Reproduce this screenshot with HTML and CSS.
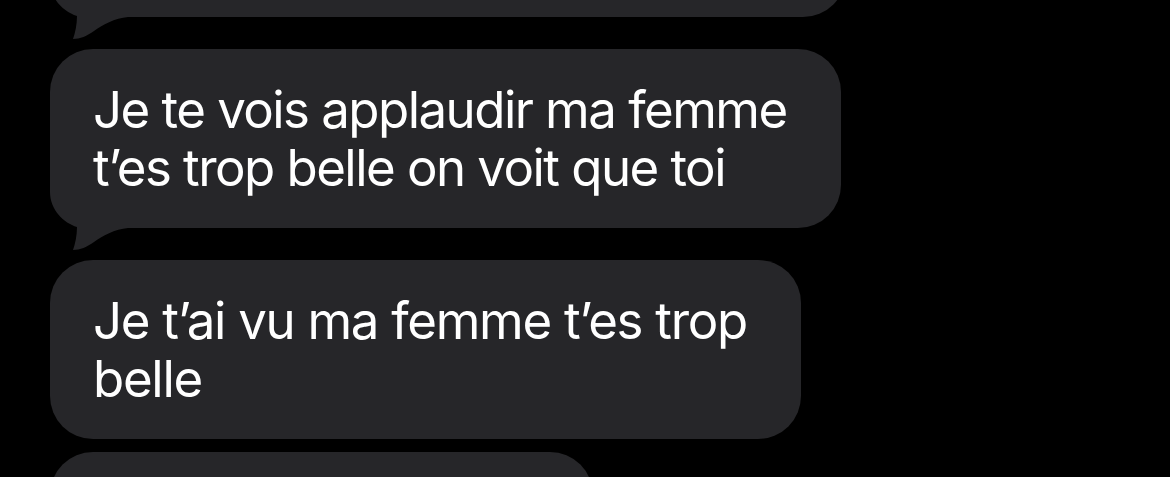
FILE: index.html
```html
<!DOCTYPE html>
<html lang="fr">
<head>
<meta charset="utf-8">
<title>Messages</title>
<link rel="stylesheet" href="styles.css">
</head>
<body>
<div class="thread">
  <div class="bubble bubble-prev">
    <svg class="tail" viewBox="0 0 85 70" width="85" height="70" aria-hidden="true"><path d="M0 0 H85 V48 H78 C65 49 52 56 44 62 C37 67 30 70 23 70 C25 64 27 56 27 47 C14 43 0 30 0 12 Z"/></svg>
  </div>
  <div class="bubble bubble-tail">
    <p class="text">Je te vois applaudir ma femme<br>t’es trop belle on voit que toi</p>
    <svg class="tail" viewBox="0 0 85 70" width="85" height="70" aria-hidden="true"><path d="M0 0 H85 V48 H78 C65 49 52 56 44 62 C37 67 30 70 23 70 C25 64 27 56 27 47 C14 43 0 30 0 12 Z"/></svg>
  </div>
  <div class="bubble bubble-short">
    <p class="text">Je t’ai vu ma femme t’es trop<br>belle</p>
  </div>
  <div class="bubble bubble-next"></div>
</div>
</body>
</html>
```

FILE: styles.css
```css
html, body {
  margin: 0;
  padding: 0;
  background: #000;
  overflow: hidden;
}

.thread {
  display: flex;
  flex-direction: column;
  align-items: flex-start;
  gap: 32px;
  padding-left: 50px;
  margin-top: -161px;
}

.bubble {
  position: relative;
  background: #262629;
  border-radius: 43px;
  padding: 32px 54px 31px 43px;
  color: #fff;
  font-family: Inter, "Liberation Sans", sans-serif;
  font-size: 51px;
  line-height: 58px;
  letter-spacing: -1.55px;
}

.bubble-short {
  letter-spacing: -1.3px;
}

.text {
  position: relative;
  z-index: 1;
  margin: 0;
  white-space: nowrap;
}

.bubble-prev {
  width: 699px;
  height: 115px;
}

.bubble-next {
  width: 543px;
  height: 120px;
  margin-top: -19px;
  padding: 0;
}

.tail {
  position: absolute;
  left: 0;
  bottom: -22px;
  fill: #262629;
  display: block;
}
```
